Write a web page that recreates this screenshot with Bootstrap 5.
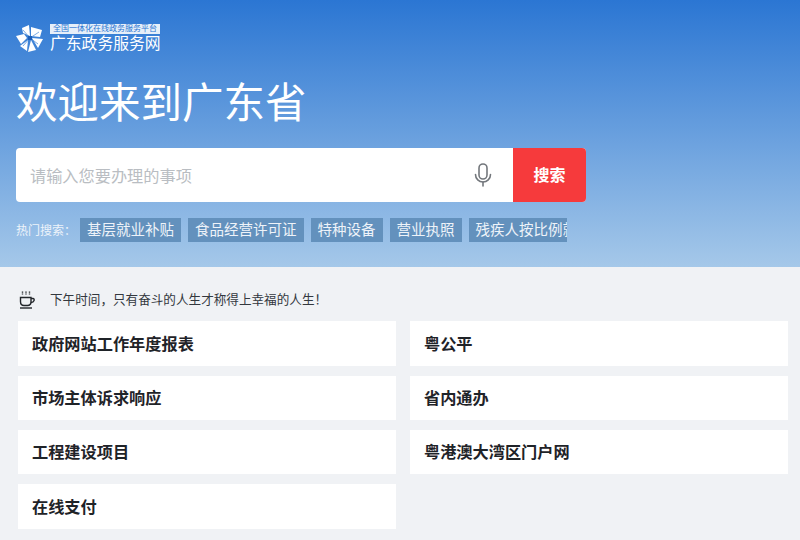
<!DOCTYPE html>
<html lang="zh-CN">
<head>
  <meta charset="UTF-8">
  <title>广东政务服务网</title>
  <link href="https://cdn.jsdelivr.net/npm/bootstrap@5.3.3/dist/css/bootstrap.min.css" rel="stylesheet">
  <style>
    html, body { height: 540px; overflow: hidden; }
    body { background: #f0f2f5; font-family: "Liberation Sans", "Noto Sans CJK SC", sans-serif; color: #1f2328; }
    .hero { height: 267px; padding: 24px 16px 0; background: linear-gradient(180deg, #2b76d3 0%, #a5c8e9 100%); color: #fff; }
    .logo-box { height: 28px; }
    .logo-mark { margin-right: 6px; }
    .logo-top { font-size: 8px; line-height: 10px; height: 10px; width: 110px; text-align: center; background: #e6eff9; color: #2b76d3; white-space: nowrap; }
    .logo-name { font-size: 15.8px; line-height: 18px; padding-top: 1px; white-space: nowrap; }
    .hero-title { font-size: 41.5px; line-height: 60px; font-weight: 400; margin: 22px 0 14px; }
    .search-box { width: 570px; height: 54px; background: #fff; border-radius: 4px; overflow: hidden; }
    .search-text { font-size: 16.2px; color: #b9bdc2; padding: 3px 0 0 14px; }
    .search-mic { margin-right: 20px; }
    .search-btn { width: 73px; height: 54px; background: #f63a3c; color: #fff; border: 0; border-radius: 0; font-size: 16px; font-weight: 700; padding: 1px 0 0; }
    .hot-row { margin-top: 16px; height: 24px; }
    .hot-label { font-size: 12px; line-height: 24px; padding-top: 1px; color: #edf3fa; margin-right: 4px; white-space: nowrap; }
    .hot-tag { height: 24px; line-height: 24px; padding: 0 7px; font-size: 14.5px; color: #eef3f9; background: #6391bd; margin-right: 7px; white-space: nowrap; overflow: hidden; }
    .hot-tag-cut { width: 98px; margin-right: 0; }
    .greet { height: 54px; padding: 12px 18px 0; font-size: 12.6px; color: #33383e; }
    .greet svg { margin-right: 14px; }
    .quick-grid { display: grid; grid-template-columns: 378px 378px; grid-template-rows: 45px 44px 44px 45px; column-gap: 14px; row-gap: 10px; padding-left: 18px; }
    .quick-item { background: #fff; padding: 1px 0 0 14px; font-size: 16.2px; font-weight: 700; color: #1f2328; }
  </style>
</head>
<body>

<div class="hero">
  <div class="logo-box d-flex align-items-center">
    <svg class="logo-mark" width="28" height="28" viewBox="0 0 28 28">
      <g fill="#fff">
        <path d="M6 4 L13 1 L14 12 L7 9 Z"/>
        <path d="M15 3 L26 6 L24 13 L15 12 Z"/>
        <path d="M16 14 L27 15 L22 24 Z"/>
        <path d="M15 16 L20 26 L12 28 Z"/>
        <path d="M12 16 L11 27 L4 22 Z"/>
        <path d="M11 14 L5 20 L0 12 L8 10 Z"/>
      </g>
      <path d="M14 14 L7 6 M14 14 L23 8 M14 14 L22 20 M14 14 L7 22" stroke="#5c96da" stroke-width="0.8"/>
      <rect x="12" y="12" width="4" height="4" fill="#1f5fb8"/>
    </svg>
    <div>
      <div class="logo-top">全国一体化在线政务服务平台</div>
      <div class="logo-name">广东政务服务网</div>
    </div>
  </div>

  <h1 class="hero-title">欢迎来到广东省</h1>

  <div class="search-box d-flex align-items-center">
    <div class="search-text flex-grow-1">请输入您要办理的事项</div>
    <svg class="search-mic" width="20" height="24" viewBox="0 0 20 24" fill="none" stroke="#73777c" stroke-width="1.6" stroke-linecap="round">
      <rect x="6" y="1" width="8" height="15" rx="4"/>
      <path d="M2.5 11.5 C2.5 16 6 19 10 19 C14 19 17.5 16 17.5 11.5"/>
      <path d="M10 19 V23"/>
    </svg>
    <button class="btn search-btn">搜索</button>
  </div>

  <div class="hot-row d-flex align-items-center">
    <span class="hot-label">热门搜索：</span>
    <span class="hot-tag">基层就业补贴</span>
    <span class="hot-tag">食品经营许可证</span>
    <span class="hot-tag">特种设备</span>
    <span class="hot-tag">营业执照</span>
    <span class="hot-tag hot-tag-cut">残疾人按比例就业</span>
  </div>
</div>

<div class="greet d-flex align-items-center">
  <svg width="18" height="18" viewBox="0 0 18 18" fill="none" stroke="#23272b" stroke-width="1.4">
    <path d="M2.5 6.5 H13 V10.5 C13 13 11.5 14.5 9.5 14.5 H6 C4 14.5 2.5 13 2.5 10.5 Z"/>
    <path d="M13 7.5 H15 C17 7.5 16.5 11.5 13 11.5"/>
    <path d="M2 17 H14"/>
    <path d="M4.5 0.5 V3.5 M8 0.5 V3.5 M11.5 0.5 V3.5" stroke-dasharray="1.2 0.8"/>
  </svg>
  <span>下午时间，只有奋斗的人生才称得上幸福的人生！</span>
</div>

<div class="quick-grid">
  <div class="quick-item d-flex align-items-center">政府网站工作年度报表</div>
  <div class="quick-item d-flex align-items-center">粤公平</div>
  <div class="quick-item d-flex align-items-center">市场主体诉求响应</div>
  <div class="quick-item d-flex align-items-center">省内通办</div>
  <div class="quick-item d-flex align-items-center">工程建设项目</div>
  <div class="quick-item d-flex align-items-center">粤港澳大湾区门户网</div>
  <div class="quick-item d-flex align-items-center">在线支付</div>
</div>

<script src="https://cdn.jsdelivr.net/npm/bootstrap@5.3.3/dist/js/bootstrap.bundle.min.js"></script>
</body>
</html>
